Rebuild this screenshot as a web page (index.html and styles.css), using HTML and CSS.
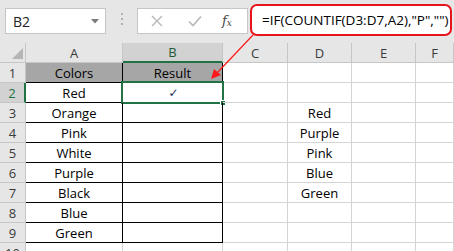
FILE: index.html
```html
<!DOCTYPE html>
<html>
<head>
<meta charset="utf-8">
<link rel="stylesheet" href="styles.css">
</head>
<body>
<div class="app">
  <div class="fbar">
    <div class="namebox">
      <span class="nb-text">B2</span>
      <svg class="nb-caret" width="8" height="5" viewBox="0 0 8 5"><polygon points="0,0 8,0 4,4.5" fill="#7a7a7a"/></svg>
    </div>
    <div class="sep"><i></i><i></i><i></i></div>
    <div class="btnbox">
      <svg class="ico" width="12" height="12" viewBox="0 0 12 12"><path d="M1 1 L11 11 M11 1 L1 11" stroke="#b8b8b8" stroke-width="1.4" fill="none"/></svg>
      <svg class="ico" width="14" height="12" viewBox="0 0 14 12"><path d="M1 6.5 L5 10.5 L13 1.5" stroke="#b8b8b8" stroke-width="1.6" fill="none"/></svg>
      <span class="fx">f<sub>x</sub></span>
    </div>
    <div class="formula">=IF(COUNTIF(D3:D7,A2),"P","")</div>
  </div>

  <div class="grid">
    <div class="corner"><svg width="11" height="11" viewBox="0 0 11 11"><polygon points="11,0 11,11 0,11" fill="#b5b5b5"/></svg></div>
    <div class="ch">A</div>
    <div class="ch sel">B</div>
    <div class="ch">C</div>
    <div class="ch">D</div>
    <div class="ch">E</div>
    <div class="ch">F</div>

    <div class="rh">1</div>
    <div class="c bx hd">Colors</div>
    <div class="c bx hd">Result</div>
    <div class="c"></div><div class="c"></div><div class="c"></div><div class="c"></div>

    <div class="rh sel">2</div>
    <div class="c bx">Red</div>
    <div class="c bx active"><span class="tick">✓</span><span class="selbox"></span><span class="handle"></span></div>
    <div class="c"></div><div class="c"></div><div class="c"></div><div class="c"></div>

    <div class="rh">3</div>
    <div class="c bx">Orange</div>
    <div class="c bx"></div>
    <div class="c"></div><div class="c ctr">Red</div><div class="c"></div><div class="c"></div>

    <div class="rh">4</div>
    <div class="c bx">Pink</div>
    <div class="c bx"></div>
    <div class="c"></div><div class="c ctr">Purple</div><div class="c"></div><div class="c"></div>

    <div class="rh">5</div>
    <div class="c bx">White</div>
    <div class="c bx"></div>
    <div class="c"></div><div class="c ctr">Pink</div><div class="c"></div><div class="c"></div>

    <div class="rh">6</div>
    <div class="c bx">Purple</div>
    <div class="c bx"></div>
    <div class="c"></div><div class="c ctr">Blue</div><div class="c"></div><div class="c"></div>

    <div class="rh">7</div>
    <div class="c bx">Black</div>
    <div class="c bx"></div>
    <div class="c"></div><div class="c ctr">Green</div><div class="c"></div><div class="c"></div>

    <div class="rh">8</div>
    <div class="c bx">Blue</div>
    <div class="c bx"></div>
    <div class="c"></div><div class="c"></div><div class="c"></div><div class="c"></div>

    <div class="rh">9</div>
    <div class="c bx">Green</div>
    <div class="c bx"></div>
    <div class="c"></div><div class="c"></div><div class="c"></div><div class="c"></div>

    <div class="rh">10</div>
    <div class="c"></div><div class="c"></div>
    <div class="c"></div><div class="c"></div><div class="c"></div><div class="c"></div>
  </div>

  <svg class="arrow" width="454" height="251" viewBox="0 0 454 251">
    <line x1="253" y1="35" x2="217" y2="73" stroke="#ff1a1a" stroke-width="1.2"/>
    <polygon points="211,79 214,69 221,75" fill="#ff1a1a"/>
  </svg>
</div>
</body>
</html>
```

FILE: styles.css
```css
* { box-sizing: border-box; }
html, body { margin: 0; padding: 0; }
body {
  width: 454px;
  height: 251px;
  overflow: hidden;
  background: #ffffff;
  font-family: "Open Sans", "Liberation Sans", sans-serif;
}
.app {
  position: relative;
  width: 454px;
  height: 251px;
  overflow: hidden;
}
.fbar {
  height: 43px;
  background: #e6e6e6;
  display: flex;
  align-items: flex-start;
  padding-left: 5px;
}
.namebox {
  margin-top: 8px;
  width: 101px;
  height: 26px;
  background: #fff;
  border: 1px solid #c6c6c6;
  display: flex;
  align-items: center;
  justify-content: space-between;
  padding: 0 6px 0 7px;
}
.nb-text { font-size: 14px; color: #222; }
.nb-caret { margin-top: 1px; }
.sep {
  width: 31px;
  margin-top: 13px;
  display: flex;
  flex-direction: column;
  align-items: center;
  gap: 3px;
}
.sep i {
  display: block;
  width: 2px;
  height: 2px;
  background: #b0b0b0;
}
.btnbox {
  margin-top: 8px;
  width: 111px;
  height: 26px;
  background: #fff;
  border: 1px solid #c6c6c6;
  display: flex;
  align-items: center;
  padding-left: 13px;
  gap: 0;
}
.btnbox .ico:nth-child(1) { margin-right: 25px; }
.btnbox .ico:nth-child(2) { margin-right: 20px; }
.fx {
  font-family: "DejaVu Serif", "Liberation Serif", serif;
  font-style: italic;
  font-size: 13px;
  color: #444;
  line-height: 1;
}
.fx sub { font-size: 9px; vertical-align: -1px; }
.formula {
  margin-top: 4px;
  margin-left: 2px;
  width: 202px;
  height: 32px;
  background: #fff;
  border: 2px solid #e8141b;
  border-radius: 7px;
  font-size: 13.5px;
  color: #000;
  display: flex;
  align-items: center;
  padding-left: 10px;
  white-space: nowrap;
  overflow: hidden;
}
.grid {
  display: grid;
  grid-template-columns: 26px 97px 100px 65px 64px 64px 38px;
  grid-auto-rows: 20px;
  font-size: 13px;
}
.corner {
  background: #e6e6e6;
  border-right: 1px solid #c6c6c6;
  border-bottom: 1px solid #c6c6c6;
  display: flex;
  align-items: flex-end;
  justify-content: flex-end;
  padding: 0 2px 3px 0;
}
.ch {
  background: #e6e6e6;
  border-right: 1px solid #c6c6c6;
  border-bottom: 1px solid #c6c6c6;
  display: flex;
  align-items: center;
  justify-content: center;
  color: #3a3a3a;
  font-size: 13px;
}
.ch.sel {
  background: #d2d2d2;
  border-bottom: 2px solid #217346;
  color: #1f5a38;
}
.rh {
  background: #e6e6e6;
  border-right: 1px solid #c6c6c6;
  border-bottom: 1px solid #c6c6c6;
  display: flex;
  align-items: center;
  justify-content: center;
  color: #3a3a3a;
  font-size: 13px;
}
.rh.sel {
  background: #d2d2d2;
  border-right: 2px solid #217346;
  color: #217346;
}
.c {
  border-right: 1px solid #d4d4d4;
  border-bottom: 1px solid #d4d4d4;
  color: #000;
  display: flex;
  align-items: center;
  justify-content: center;
  white-space: nowrap;
  position: relative;
}
.c.bx {
  border-right: 1px solid #000;
  border-bottom: 1px solid #000;
}
.c.hd {
  background: #a6a6a6;
}
.active .tick {
  font-family: "DejaVu Sans", sans-serif;
  font-size: 12px;
  color: #1b2a5a;
  margin-left: 2px;
}
.selbox {
  position: absolute;
  left: -2px;
  top: -2px;
  right: -2px;
  bottom: -2px;
  border: 2px solid #217346;
}
.handle {
  position: absolute;
  right: -4px;
  bottom: -4px;
  width: 6px;
  height: 6px;
  background: #217346;
  border: 1px solid #fff;
}
.arrow {
  position: absolute;
  left: 0;
  top: 0;
  pointer-events: none;
}
```
